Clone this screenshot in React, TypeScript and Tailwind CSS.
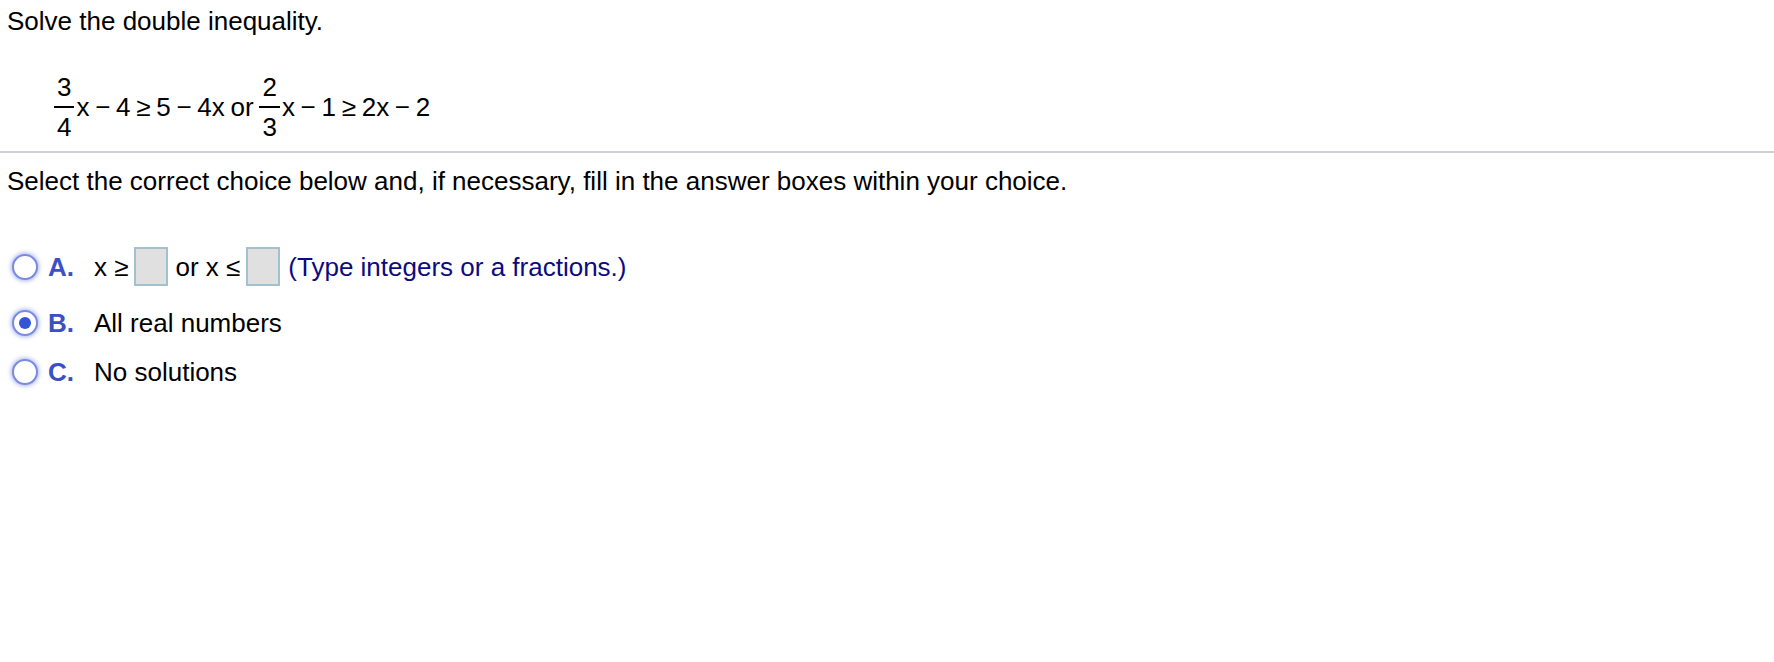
import React from 'react';

const Frac: React.FC<{ num: string; den: string }> = ({ num, den }) => (
  <span className="inline-flex flex-col items-center mr-[2px] leading-none">
    <span className="px-[3px] pb-[6px]">{num}</span>
    <span className="w-full h-[2px] bg-black" />
    <span className="px-[3px] pt-[6px]">{den}</span>
  </span>
);

const Radio: React.FC<{ checked?: boolean }> = ({ checked }) => (
  <span className="w-[26px] h-[26px] rounded-full border-2 border-[#7a8ae0] shadow-[0_0_4px_1px_rgba(110,130,225,0.6)] flex items-center justify-center bg-white shrink-0">
    {checked && <span className="w-[12px] h-[12px] rounded-full bg-[#3553d4]" />}
  </span>
);

const Box = () => (
  <span className="inline-block w-[34px] h-[39px] bg-[#e0e0e0] border-2 border-[#a3c0cf]" />
);

const Option: React.FC<{ letter: string; checked?: boolean; children: React.ReactNode; className?: string }> = ({ letter, checked, children, className }) => (
  <div className={'flex items-center ' + (className || '')}>
    <div className="w-[48px] flex items-center pl-[12px]">
      <Radio checked={checked} />
    </div>
    <span className="w-[46px] font-bold text-[#3b4fc6]">{letter}</span>
    <div className="flex items-center">{children}</div>
  </div>
);

export default function App() {
  return (
    <div className="w-[1774px] h-[662px] bg-white text-black text-[26px] leading-[30px] font-['Liberation_Sans',Arial,sans-serif]">
      <div className="pl-[7px] pt-[6px]">Solve the double inequality.</div>

      <div className="pl-[54px] mt-[38px] flex items-center h-[66px] [word-spacing:-1.5px]">
        <Frac num="3" den="4" />
        <span>x − 4 ≥ 5 − 4x or&nbsp;</span>
        <Frac num="2" den="3" />
        <span>x − 1 ≥ 2x − 2</span>
      </div>

      <div className="mt-[11px] h-[2px] bg-[#cdd0da]" />

      <div className="pl-[7px] mt-[13px]">
        Select the correct choice below and, if necessary, fill in the answer boxes within your choice.
      </div>

      <div className="mt-[51px]">
        <Option letter="A.">
          <span className="mr-[5px]">x ≥</span>
          <Box />
          <span className="ml-[8px] mr-[6px]">or x ≤</span>
          <Box />
          <span className="ml-[8px] text-[#0b0b80]">(Type integers or a fractions.)</span>
        </Option>
        <Option letter="B." checked className="mt-[22px]">
          <span>All real numbers</span>
        </Option>
        <Option letter="C." className="mt-[19px]">
          <span>No solutions</span>
        </Option>
      </div>
    </div>
  );
}
